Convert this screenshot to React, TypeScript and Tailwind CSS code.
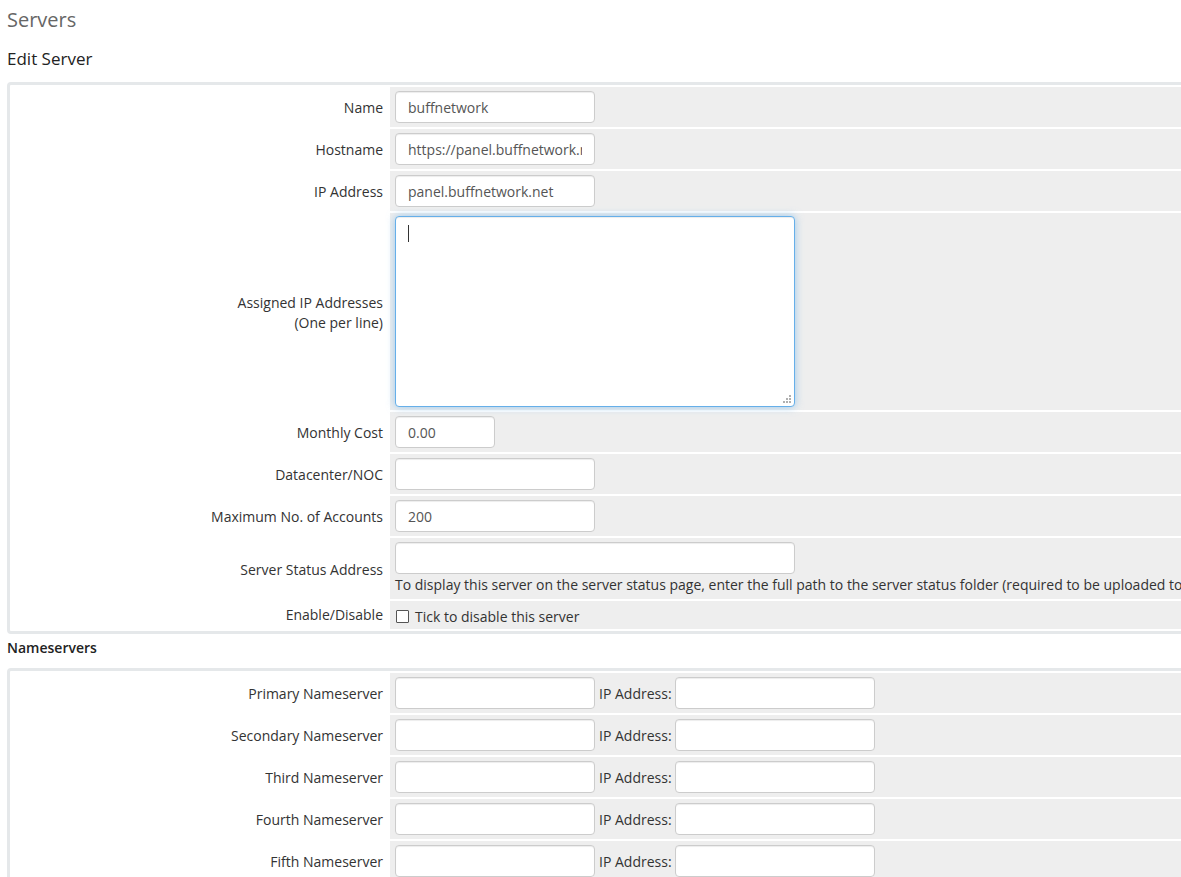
import React from "react";

const font = { fontFamily: '"Open Sans", "Liberation Sans", sans-serif' };

function Row({ label, children, className = "py-[4px]" }: { label: React.ReactNode; children: React.ReactNode; className?: string }) {
  return (
    <div className="flex gap-[2px]">
      <div className="w-[376px] shrink-0 bg-white flex items-center justify-end pr-[5px] pt-[2px] text-right text-[14px] text-[#333] leading-[20px]">
        {label}
      </div>
      <div className={"flex-1 bg-[#eeeeee] pl-[5px] flex items-center " + className}>{children}</div>
    </div>
  );
}

const inputCls =
  "h-[32px] border border-[#cccccc] rounded-[4px] bg-white px-[12px] pt-[1px] text-[14px] text-[#555] outline-none shadow-[inset_0_1px_1px_rgba(0,0,0,0.075)]";

function TextInput({ w, value = "" }: { w: string; value?: string }) {
  return <input className={inputCls + " " + w} defaultValue={value} style={font} />;
}

export default function App() {
  const ns = ["Primary", "Secondary", "Third", "Fourth", "Fifth"];
  return (
    <div className="w-[1181px] h-[877px] overflow-hidden bg-white" style={font}>
      <div className="w-[1500px] pl-[7px]">
        <h1 className="text-[20px] text-[#666] pt-[6px] leading-[28px]">Servers</h1>
        <h2 className="text-[17px] text-[#222] mt-[13px] leading-[24px]">Edit Server</h2>
        <div className="mt-[11px] border-[3px] border-[#e5e8ea] rounded-[4px] p-[2px] flex flex-col gap-[2px]">
          <Row label="Name">
            <TextInput w="w-[200px]" value="buffnetwork" />
          </Row>
          <Row label="Hostname">
            <TextInput w="w-[200px]" value="https://panel.buffnetwork.net" />
          </Row>
          <Row label="IP Address">
            <TextInput w="w-[200px]" value="panel.buffnetwork.net" />
          </Row>
          <Row
            className="py-[3px]"
            label={
              <span>
                Assigned IP Addresses
                <br />
                (One per line)
              </span>
            }
          >
            <div className="relative">
              <textarea
                className="block w-[400px] h-[191px] resize-none border border-[#66afe9] rounded-[4px] bg-white px-[12px] py-[6px] text-[14px] text-[#555] outline-none shadow-[inset_0_1px_1px_rgba(0,0,0,0.075),0_0_8px_rgba(102,175,233,0.6)]"
                style={font}
              />
              <div className="absolute left-[13px] top-[9px] w-[1px] h-[17px] bg-[#333]" />
              <svg className="absolute right-[3px] bottom-[3px]" width="9" height="9" viewBox="0 0 9 9">
                <rect x="6" y="0" width="2" height="2" fill="#b0b0b0" />
                <rect x="3" y="3" width="2" height="2" fill="#b0b0b0" />
                <rect x="6" y="3" width="2" height="2" fill="#b0b0b0" />
                <rect x="0" y="6" width="2" height="2" fill="#b0b0b0" />
                <rect x="3" y="6" width="2" height="2" fill="#b0b0b0" />
                <rect x="6" y="6" width="2" height="2" fill="#b0b0b0" />
              </svg>
            </div>
          </Row>
          <Row label="Monthly Cost">
            <TextInput w="w-[100px]" value="0.00" />
          </Row>
          <Row label="Datacenter/NOC">
            <TextInput w="w-[200px]" />
          </Row>
          <Row label="Maximum No. of Accounts">
            <TextInput w="w-[200px]" value="200" />
          </Row>
          <Row label="Server Status Address">
            <div className="flex flex-col">
              <TextInput w="w-[400px]" />
              <div className="text-[14px] text-[#333] leading-[20px] mt-[1px] whitespace-nowrap">
                To display this server on the server status page, enter the full path to the server status folder (required to be uploaded to each server you want to monitor) - eg. https://www.example.com/status/
              </div>
            </div>
          </Row>
          <div className="flex gap-[2px]">
            <div className="w-[376px] shrink-0 bg-white flex items-center justify-end pr-[5px] text-[14px] text-[#333] leading-[20px]">
              Enable/Disable
            </div>
            <div className="flex-1 bg-[#eeeeee] pl-[5px] h-[28px] flex items-center text-[14px] text-[#333]">
              <label className="flex items-center gap-[6px] pt-[2px]">
                <span className="w-[13px] h-[13px] border border-[#555] bg-white rounded-[1px] ml-[1px] inline-block" />
                Tick to disable this server
              </label>
            </div>
          </div>
        </div>
        <div className="text-[14px] text-[#222] mt-[4px] leading-[20px]" style={{ fontWeight: 600 }}>
          Nameservers
        </div>
        <div className="mt-[10px] border-[3px] border-[#e5e8ea] rounded-[4px] p-[2px] flex flex-col gap-[2px]">
          {ns.map((n) => (
            <Row key={n} label={n + " Nameserver"}>
              <TextInput w="w-[200px]" />
              <span className="text-[14px] text-[#333] ml-[4px] mr-[3px] pt-[1px]">IP Address:</span>
              <TextInput w="w-[200px]" />
            </Row>
          ))}
        </div>
      </div>
    </div>
  );
}
